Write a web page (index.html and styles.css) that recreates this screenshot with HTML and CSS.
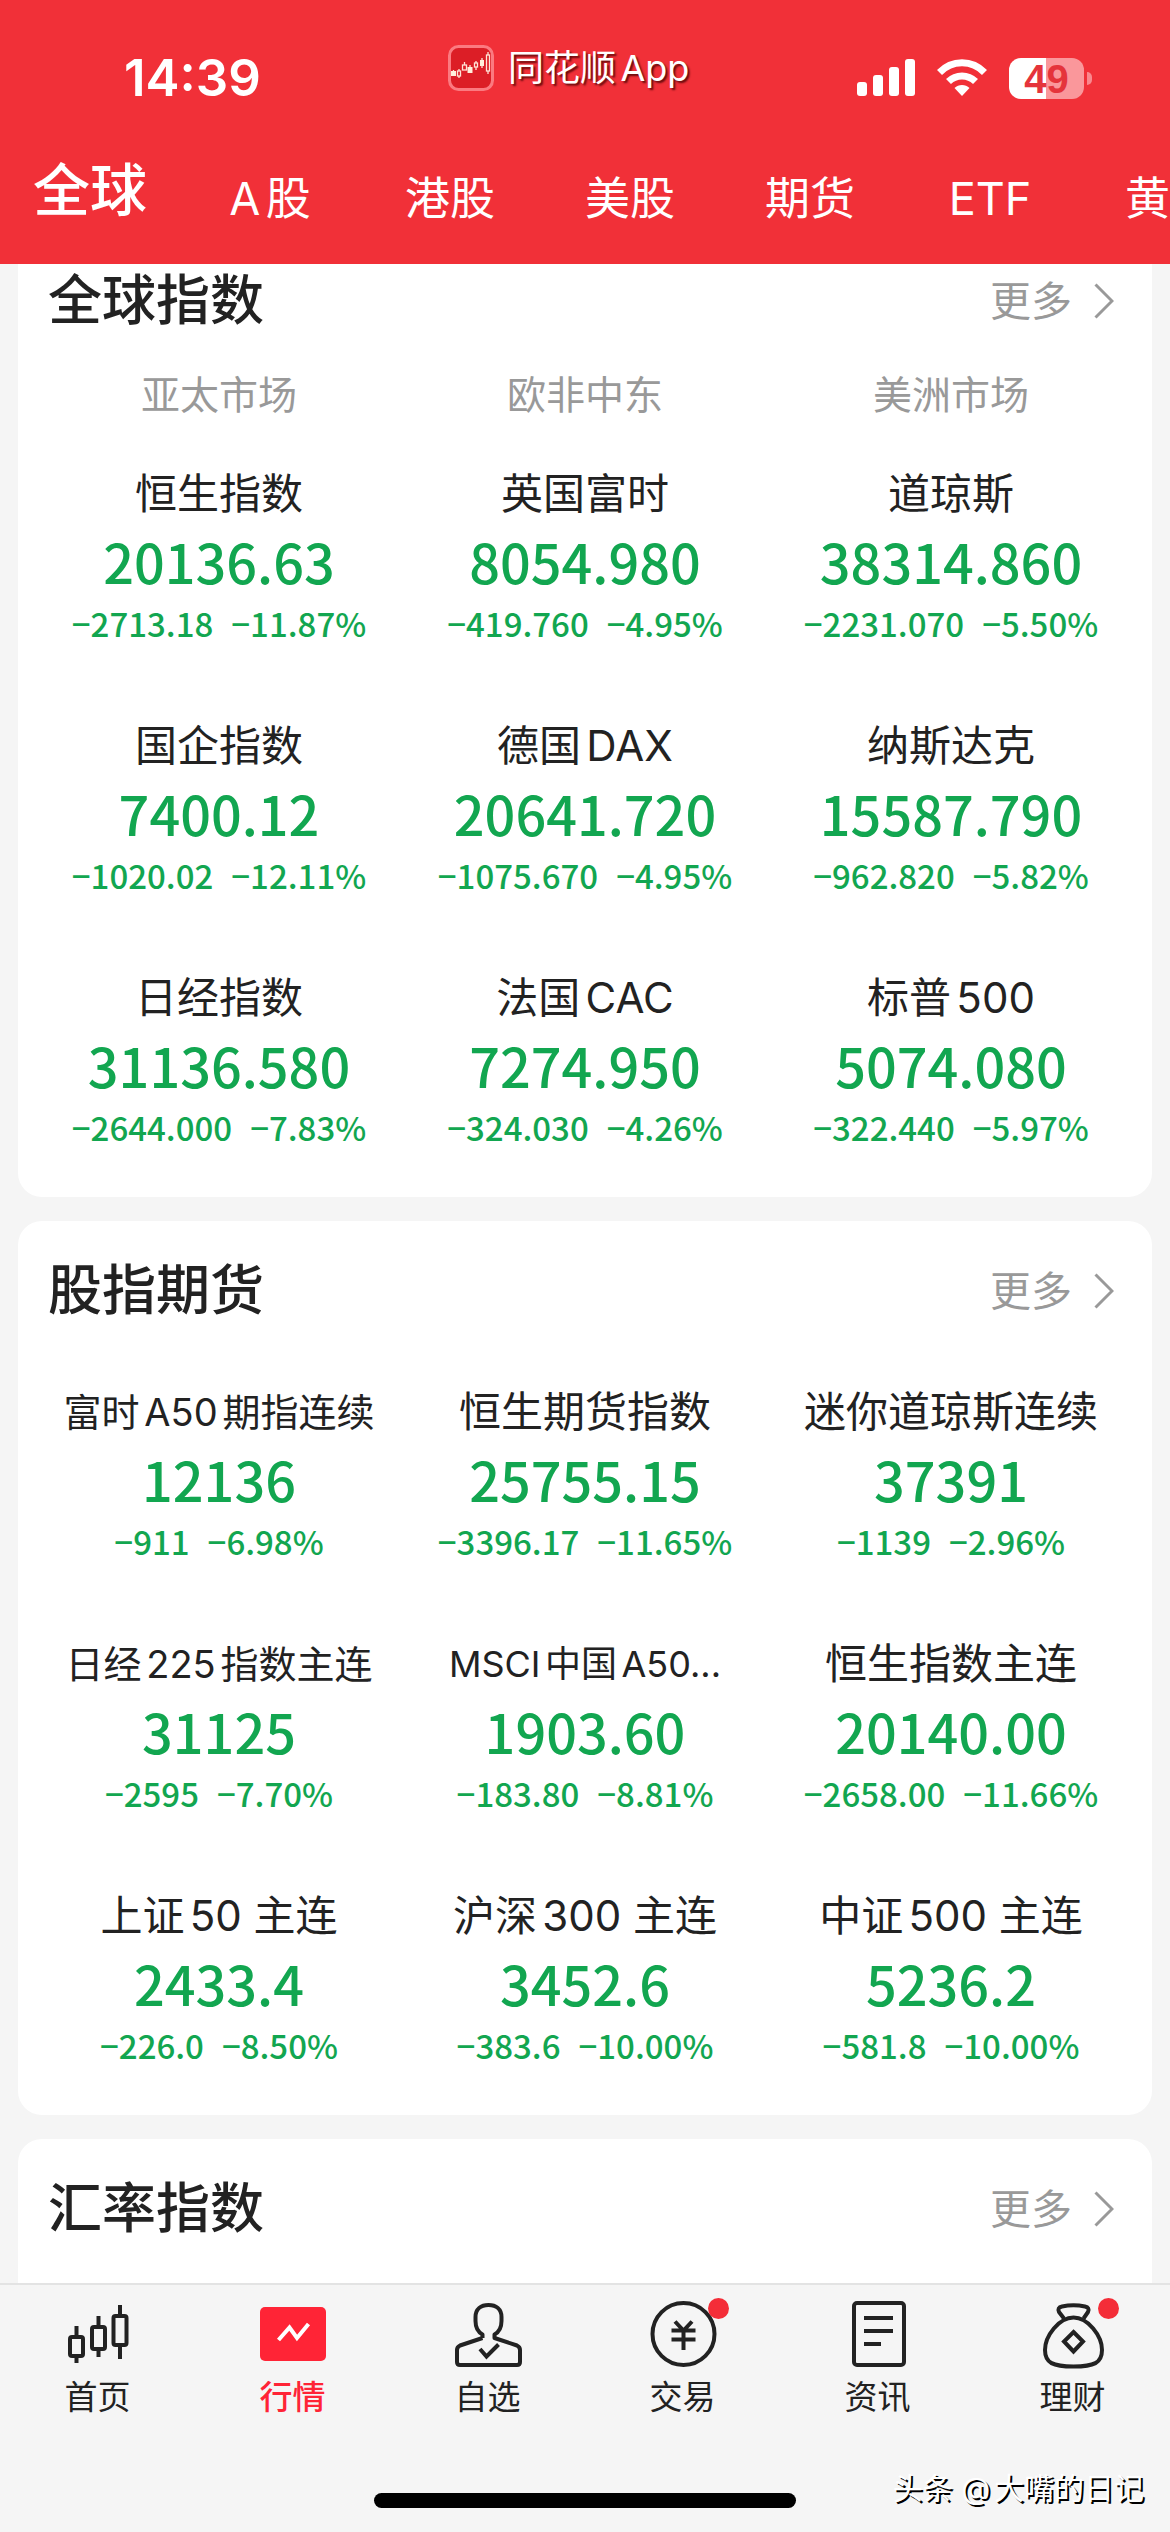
FILE: index.html
```html
<!DOCTYPE html>
<html lang="zh-CN">
<head>
<meta charset="utf-8">
<meta name="viewport" content="width=device-width, initial-scale=1">
<title>全球指数</title>
<link rel="stylesheet" href="styles.css">
</head>
<body>
<div class="app">
  <header class="top">
    <div class="status">
      <span class="clock">14:39</span>
      <span class="brand">
        <svg class="brand-logo" width="46" height="46" viewBox="0 0 46 46" aria-hidden="true">
          <rect x="1.500" y="1.500" width="43" height="43" rx="9" fill="#dc1e26" stroke="#fb7a80" stroke-width="3"/>
          <g fill="none" stroke="#ffe3d6" stroke-width="1.300">
            <path d="M5.500 25v2M11 24v2M11 31v2M16.500 17v3M22 20v2M28 16v2M28 22v3M34 13v2M34 21v2M40 7v3M40 26v3"/>
            <rect x="9.500" y="26" width="3" height="5"/><rect x="14.500" y="20" width="4" height="5"/>
            <rect x="26.500" y="18" width="3" height="4"/><rect x="38.500" y="10" width="3" height="16"/>
          </g>
          <g fill="#fff0dc"><rect x="3" y="26" width="5" height="5"/><rect x="19.500" y="22" width="5" height="6"/><rect x="32" y="15" width="4" height="6"/></g>
        </svg>
        <span class="brand-name">同花顺App</span>
      </span>
      <span class="signals">
        <svg width="58" height="38" viewBox="0 0 58 38" fill="#fff" aria-hidden="true">
          <rect x="0" y="23" width="10" height="14" rx="3"/><rect x="16" y="16" width="10" height="21" rx="3"/>
          <rect x="32" y="8" width="10" height="29" rx="3"/><rect x="48" y="0" width="10" height="37" rx="3"/>
        </svg>
        <svg width="50" height="38" viewBox="0 0 50 38" aria-hidden="true">
          <path d="M2.500 13.500C15 .500 35 .500 47.500 13.500M11.500 22.500C19 15 31 15 38.500 22.500" fill="none" stroke="#fff" stroke-width="7"/>
          <path d="M25 37l-7.500-8c4-4 11-4 15 0z" fill="#fff"/>
        </svg>
        <span class="battery"><span class="battery-level">49</span></span>
      </span>
    </div>
    <nav class="markets" aria-label="市场">
      <a class="market market-on" href="#global" aria-current="page">全球</a>
      <a class="market" href="#a">A股</a>
      <a class="market" href="#hk">港股</a>
      <a class="market" href="#us">美股</a>
      <a class="market" href="#futures">期货</a>
      <a class="market" href="#etf">ETF</a>
      <a class="market" href="#gold">黄金</a>
    </nav>
  </header>

  <main class="content">
    <section class="card card-under">
      <div class="card-head">
        <h2 class="card-title">全球指数</h2>
        <a class="more" href="#more-global">更多<svg width="20" height="36" viewBox="0 0 20 36" aria-hidden="true"><path d="M1.500 1.500L18 18 1.500 34.500" fill="none" stroke="#999" stroke-width="3"/></svg></a>
      </div>
      <div class="regions"><span>亚太市场</span><span>欧非中东</span><span>美洲市场</span></div>
      <div class="quotes">
        <article class="quote"><h3 class="name">恒生指数</h3><p class="price">20136.63</p><p class="change"><span>−2713.18</span><span>−11.87%</span></p></article>
        <article class="quote"><h3 class="name">英国富时</h3><p class="price">8054.980</p><p class="change"><span>−419.760</span><span>−4.95%</span></p></article>
        <article class="quote"><h3 class="name">道琼斯</h3><p class="price">38314.860</p><p class="change"><span>−2231.070</span><span>−5.50%</span></p></article>
        <article class="quote"><h3 class="name">国企指数</h3><p class="price">7400.12</p><p class="change"><span>−1020.02</span><span>−12.11%</span></p></article>
        <article class="quote"><h3 class="name">德国DAX</h3><p class="price">20641.720</p><p class="change"><span>−1075.670</span><span>−4.95%</span></p></article>
        <article class="quote"><h3 class="name">纳斯达克</h3><p class="price">15587.790</p><p class="change"><span>−962.820</span><span>−5.82%</span></p></article>
        <article class="quote"><h3 class="name">日经指数</h3><p class="price">31136.580</p><p class="change"><span>−2644.000</span><span>−7.83%</span></p></article>
        <article class="quote"><h3 class="name">法国CAC</h3><p class="price">7274.950</p><p class="change"><span>−324.030</span><span>−4.26%</span></p></article>
        <article class="quote"><h3 class="name">标普500</h3><p class="price">5074.080</p><p class="change"><span>−322.440</span><span>−5.97%</span></p></article>
      </div>
    </section>

    <section class="card">
      <div class="card-head">
        <h2 class="card-title">股指期货</h2>
        <a class="more" href="#more-futures">更多<svg width="20" height="36" viewBox="0 0 20 36" aria-hidden="true"><path d="M1.500 1.500L18 18 1.500 34.500" fill="none" stroke="#999" stroke-width="3"/></svg></a>
      </div>
      <div class="quotes">
        <article class="quote"><h3 class="name name-long">富时A50期指连续</h3><p class="price">12136</p><p class="change"><span>−911</span><span>−6.98%</span></p></article>
        <article class="quote"><h3 class="name">恒生期货指数</h3><p class="price">25755.15</p><p class="change"><span>−3396.17</span><span>−11.65%</span></p></article>
        <article class="quote"><h3 class="name">迷你道琼斯连续</h3><p class="price">37391</p><p class="change"><span>−1139</span><span>−2.96%</span></p></article>
        <article class="quote"><h3 class="name name-long">日经225指数主连</h3><p class="price">31125</p><p class="change"><span>−2595</span><span>−7.70%</span></p></article>
        <article class="quote"><h3 class="name name-xlong">MSCI中国A50...</h3><p class="price">1903.60</p><p class="change"><span>−183.80</span><span>−8.81%</span></p></article>
        <article class="quote"><h3 class="name">恒生指数主连</h3><p class="price">20140.00</p><p class="change"><span>−2658.00</span><span>−11.66%</span></p></article>
        <article class="quote"><h3 class="name">上证50 主连</h3><p class="price">2433.4</p><p class="change"><span>−226.0</span><span>−8.50%</span></p></article>
        <article class="quote"><h3 class="name">沪深300 主连</h3><p class="price">3452.6</p><p class="change"><span>−383.6</span><span>−10.00%</span></p></article>
        <article class="quote"><h3 class="name">中证500 主连</h3><p class="price">5236.2</p><p class="change"><span>−581.8</span><span>−10.00%</span></p></article>
      </div>
    </section>

    <section class="card">
      <div class="card-head">
        <h2 class="card-title">汇率指数</h2>
        <a class="more" href="#more-fx">更多<svg width="20" height="36" viewBox="0 0 20 36" aria-hidden="true"><path d="M1.500 1.500L18 18 1.500 34.500" fill="none" stroke="#999" stroke-width="3"/></svg></a>
      </div>
    </section>
  </main>

  <footer class="bottom">
    <nav class="tabs" aria-label="主导航">
      <a class="tab" href="#home">
        <span class="tab-icon"><svg width="72" height="72" viewBox="0 0 72 72" fill="none" stroke="#222" stroke-width="4" aria-hidden="true">
          <rect x="8" y="39" width="13" height="19" rx="2"/><path d="M14.500 28v11M14.500 58v7"/>
          <rect x="30" y="29" width="13" height="22" rx="2"/><path d="M36.500 18v11M36.500 51v8"/>
          <rect x="51.500" y="18" width="13" height="29" rx="2"/><path d="M58 7v11M58 47v14"/>
        </svg></span>首页</a>
      <a class="tab tab-on" href="#quotes" aria-current="page">
        <span class="tab-icon"><svg width="72" height="72" viewBox="0 0 72 72" aria-hidden="true">
          <rect x="3" y="9" width="66" height="54" rx="5" fill="#ff2436"/><path d="M21.500 42L32.500 29.500 40 40 51.500 26" fill="none" stroke="#fff" stroke-width="4"/>
        </svg></span>行情</a>
      <a class="tab" href="#watch">
        <span class="tab-icon"><svg width="72" height="72" viewBox="0 0 72 72" fill="none" stroke="#222" stroke-width="4" stroke-linejoin="round" aria-hidden="true">
          <path d="M30.500 40V36.500C26 34 23.500 29 23.500 23V19C23.500 11 29 7 36.500 7S49.500 11 49.500 19V23C49.500 29 47 34 42.500 36.500V40L65 47.500Q68 49 68 52V64Q68 67 65 67H8Q5 67 5 64V52Q5 49 8 47.500L30.500 40"/>
          <path d="M28 51L34.500 58.500 46.500 46.500" stroke-linejoin="miter"/>
        </svg></span>自选</a>
      <a class="tab" href="#trade">
        <span class="tab-icon"><svg width="72" height="72" viewBox="0 0 72 72" fill="none" stroke="#222" stroke-width="4" aria-hidden="true">
          <circle cx="36.500" cy="36" r="31"/><path d="M28 23.500L36.500 32.500 45 23.500M24.500 32.500H48.500M24.500 41.500H48.500M36.500 32V52"/>
        </svg><i class="dot"></i></span>交易</a>
      <a class="tab" href="#news">
        <span class="tab-icon"><svg width="72" height="72" viewBox="0 0 72 72" fill="none" stroke="#222" stroke-width="4" aria-hidden="true">
          <rect x="12" y="5" width="50" height="62" rx="3"/><path d="M22 20H51M22 33H51M22 46H39"/>
        </svg></span>资讯</a>
      <a class="tab" href="#wealth">
        <span class="tab-icon"><svg width="72" height="72" viewBox="0 0 72 72" fill="none" stroke="#222" stroke-width="4" stroke-linejoin="round" aria-hidden="true">
          <path d="M27 20.500L22 14Q20 9.500 25 8.500Q36.500 6 48 8.500Q53 9.500 51 14L46.500 20.500"/>
          <path d="M36.500 19.500C51 19.500 65 38 65 52C65 65 57 68.500 36.500 68.500S8 65 8 52C8 38 22 19.500 36.500 19.500Z"/>
          <path d="M36.500 34L46 43.500 36.500 53.500 27 43.500Z" stroke-linejoin="miter"/>
        </svg><i class="dot"></i></span>理财</a>
    </nav>
    <div class="home-bar"></div>
    <span class="credit">头条 @大嘴的日记</span>
  </footer>
</div>
</body>
</html>
```

FILE: styles.css
```css
* {
  box-sizing: border-box;
}

body {
  margin: 0;
  background: #f5f5f5;
  color: #222;
  font-family: Inter, "Noto Sans CJK SC", sans-serif;
  text-autospace: normal;
}

h2,
h3,
p {
  margin: 0;
}

a {
  color: inherit;
  text-decoration: none;
}

svg {
  display: block;
  flex: none;
}

.app {
  display: flex;
  flex-direction: column;
  height: 100vh;
}

/* Header */

.top {
  position: relative;
  z-index: 1;
  flex: none;
  padding: 38px 0 34px;
  background: #f13038;
  color: #fff;
}

.status {
  display: flex;
  align-items: center;
  height: 80px;
  padding: 0 78px 0 124px;
}

.clock {
  font-size: 51px;
  font-weight: 600;
  line-height: 60px;
}

.brand {
  display: flex;
  align-items: center;
  gap: 14px;
  margin: 0 auto 20px 187px;
}

.brand-name {
  font-size: 36px;
  line-height: 46px;
  text-shadow: 2px 2px 2px rgba(70, 0, 0, 0.8);
}

.signals {
  display: flex;
  align-items: center;
  gap: 22px;
}

.battery {
  display: flex;
  align-items: center;
  gap: 3px;
}

.battery::after {
  width: 5px;
  height: 13px;
  border-radius: 0 5px 5px 0;
  background: #f9888e;
  content: "";
}

.battery-level {
  width: 75px;
  height: 41px;
  border-radius: 12px;
  background: linear-gradient(90deg, #fff 49%, #fa979b 49%);
  color: #e5343b;
  font-family: "Liberation Sans", sans-serif;
  font-size: 40px;
  font-weight: 700;
  line-height: 42px;
  text-align: center;
}

.markets {
  display: flex;
  align-items: flex-end;
  height: 112px;
  overflow: hidden;
}

.market {
  flex: 0 0 180px;
  font-size: 45px;
  line-height: 62px;
  text-align: center;
}

.market-on {
  font-size: 57px;
  font-weight: 500;
  line-height: 78px;
}

/* Cards */

.content {
  display: flex;
  flex: 1;
  flex-direction: column;
  gap: 24px;
  min-height: 0;
  padding: 0 18px;
  overflow-y: auto;
  scrollbar-width: none;
}

.card {
  flex: none;
  border-radius: 24px;
  background: #fff;
}

.card-under {
  margin-top: -33px;
}

.card:last-child {
  padding-bottom: 36px;
}

.card-head {
  display: flex;
  align-items: center;
  justify-content: space-between;
  height: 138px;
  padding: 2px 38px 0 30px;
}

.card-title {
  font-size: 54px;
  font-weight: 500;
  line-height: 72px;
}

.more {
  display: flex;
  align-items: center;
  gap: 22px;
  color: #999;
  font-size: 41px;
  line-height: 60px;
}

.regions {
  display: grid;
  grid-template-columns: repeat(3, 1fr);
  height: 72px;
  padding: 0 18px;
  color: #999;
  font-size: 39px;
  line-height: 52px;
  text-align: center;
}

.quotes {
  display: grid;
  grid-template-columns: repeat(3, 1fr);
  padding: 0 18px;
}

.quote {
  padding: 23px 0 45px;
  text-align: center;
  white-space: nowrap;
}

.name {
  font-size: 42px;
  font-weight: 400;
  line-height: 60px;
}

.name-long {
  font-size: 38px;
}

.name-xlong {
  font-size: 36px;
}

.price {
  color: #12a650;
  font-family: "Noto Sans CJK SC", sans-serif;
  font-size: 54px;
  font-weight: 500;
  line-height: 74px;
}

.change {
  display: flex;
  justify-content: center;
  gap: 18px;
  color: #12a650;
  font-family: "Noto Sans CJK SC", sans-serif;
  font-size: 33px;
  font-weight: 500;
  line-height: 50px;
}

/* Bottom bar */

.bottom {
  position: relative;
  flex: none;
  padding: 13px 0 24px;
  border-top: 2px solid #e3e3e3;
  background: #f5f5f5;
}

.tabs {
  display: grid;
  grid-template-columns: repeat(6, 1fr);
}

.tab {
  display: flex;
  flex-direction: column;
  align-items: center;
  gap: 4px;
  font-size: 33px;
  font-weight: 400;
  line-height: 46px;
}

.tab-on {
  color: #ff2436;
  font-weight: 500;
}

.tab-icon {
  position: relative;
}

.dot {
  position: absolute;
  top: 0;
  right: -10px;
  width: 21px;
  height: 21px;
  border-radius: 50%;
  background: #f42d38;
}

.home-bar {
  width: 36%;
  height: 15px;
  margin: 73px auto 0;
  border-radius: 8px;
  background: #000;
}

.credit {
  position: absolute;
  right: 26px;
  bottom: 22px;
  color: #fff;
  font-size: 30px;
  line-height: 44px;
  text-shadow: 2px 2px 0 #000;
}
```
